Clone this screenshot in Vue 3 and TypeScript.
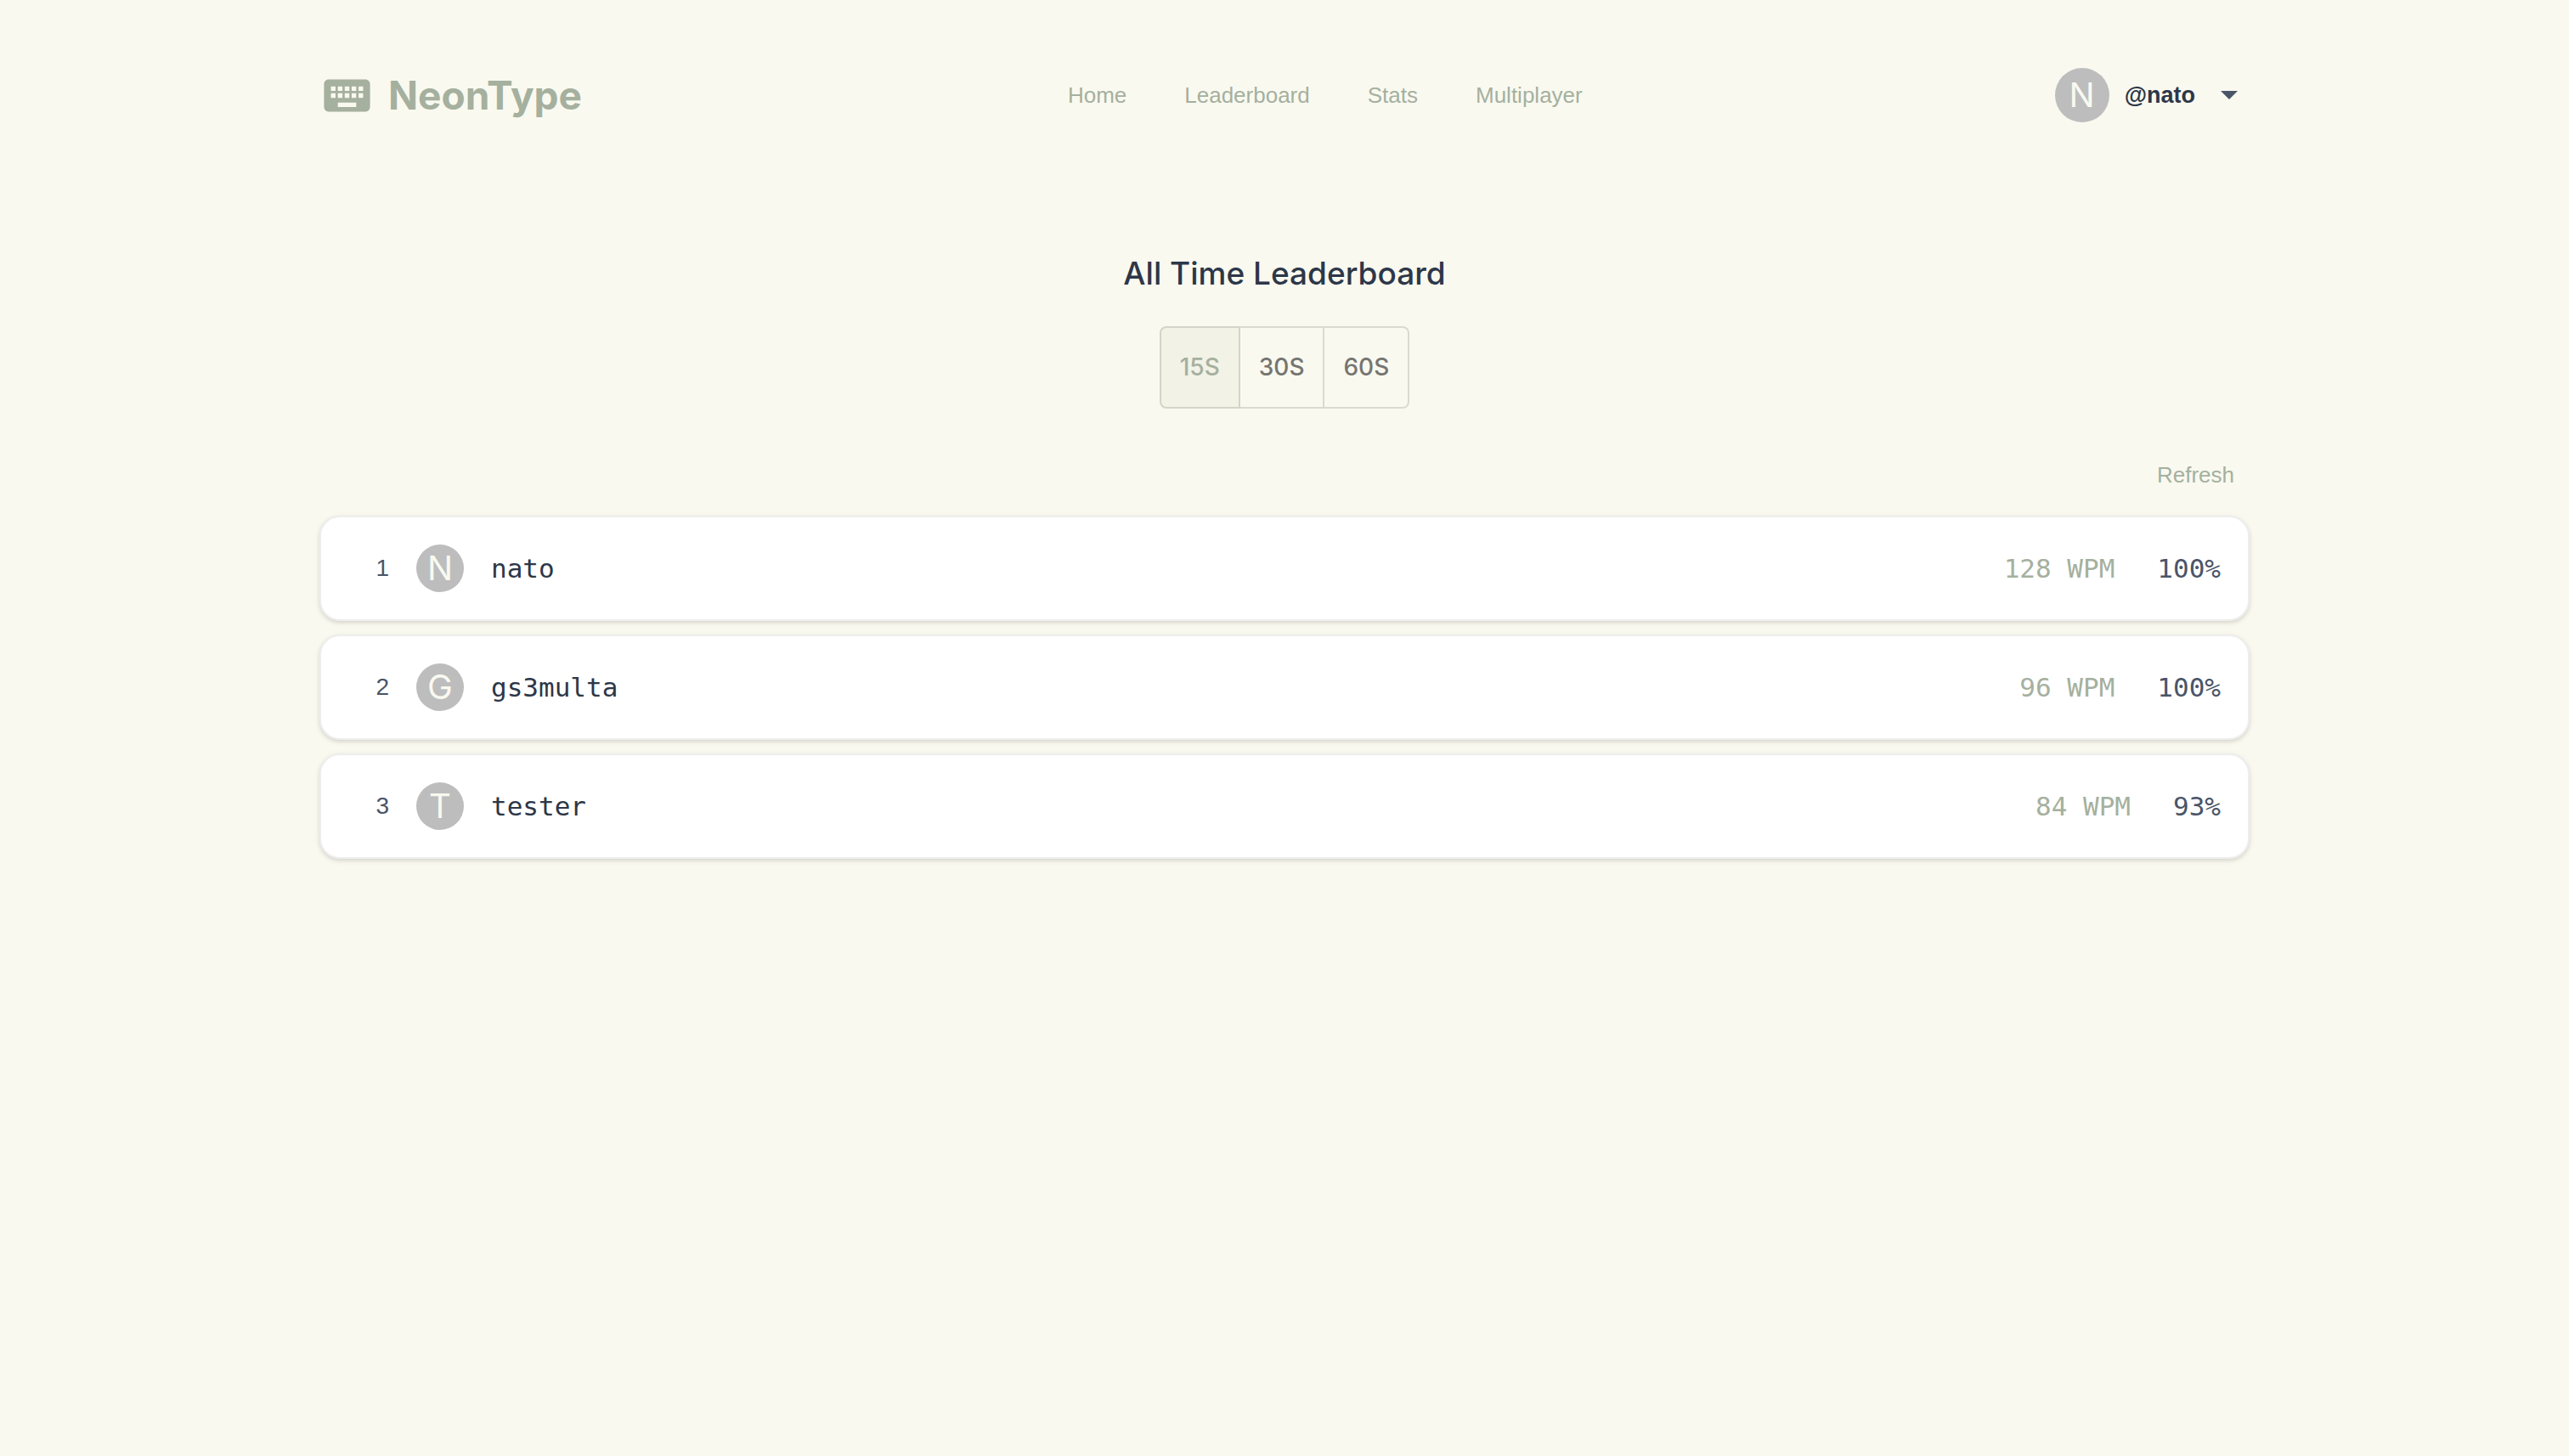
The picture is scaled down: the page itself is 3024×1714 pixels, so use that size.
<script setup lang="ts">
import { ref } from 'vue'

interface Entry {
  rank: number
  name: string
  wpm: number
  accuracy: number
}

const links: string[] = ['Home', 'Leaderboard', 'Stats', 'Multiplayer']
const durations: number[] = [15, 30, 60]
const selected = ref<number>(15)

const entries: Entry[] = [
  { rank: 1, name: 'nato', wpm: 128, accuracy: 100 },
  { rank: 2, name: 'gs3multa', wpm: 96, accuracy: 100 },
  { rank: 3, name: 'tester', wpm: 84, accuracy: 93 },
]
</script>

<template>
  <div class="page">
    <header class="header">
      <a class="brand" href="#">
        <svg class="brand-icon" viewBox="0 0 24 24" aria-hidden="true">
          <path
            fill="currentColor"
            d="M20 5H4c-1.1 0-1.99.9-1.99 2L2 17c0 1.1.9 2 2 2h16c1.1 0 2-.9 2-2V7c0-1.1-.9-2-2-2zm-9 3h2v2h-2V8zm0 3h2v2h-2v-2zM8 8h2v2H8V8zm0 3h2v2H8v-2zm-1 2H5v-2h2v2zm0-3H5V8h2v2zm9 7H8v-2h8v2zm0-4h-2v-2h2v2zm0-3h-2V8h2v2zm3 3h-2v-2h2v2zm0-3h-2V8h2v2z"
          />
        </svg>
        <span>NeonType</span>
      </a>
      <nav class="nav">
        <a v-for="link in links" :key="link" href="#">{{ link }}</a>
      </nav>
      <button class="account" type="button">
        <span class="avatar avatar-large">N</span>
        <span>@nato</span>
        <svg class="caret" viewBox="0 0 20 10" aria-hidden="true">
          <path fill="currentColor" d="M0 0h20L10 10z" />
        </svg>
      </button>
    </header>

    <main>
      <h1 class="title">All Time Leaderboard</h1>
      <div class="durations" role="group" aria-label="Test duration">
        <button
          v-for="d in durations"
          :key="d"
          type="button"
          :class="{ active: d === selected }"
          :aria-pressed="d === selected"
          @click="selected = d"
        >{{ d }}S</button>
      </div>
      <div class="toolbar">
        <button class="refresh" type="button">Refresh</button>
      </div>
      <ol class="board">
        <li v-for="entry in entries" :key="entry.rank" class="row">
          <span class="rank">{{ entry.rank }}</span>
          <span class="avatar">{{ entry.name.charAt(0).toUpperCase() }}</span>
          <span class="name">{{ entry.name }}</span>
          <span class="wpm">{{ entry.wpm }} WPM</span>
          <span class="accuracy">{{ entry.accuracy }}%</span>
        </li>
      </ol>
    </main>
  </div>
</template>

<style>
body {
  background: #f9f9f0;
}
</style>

<style scoped>
.page {
  box-sizing: border-box;
  max-width: 2336px;
  margin: 0 auto;
  padding: 64px 32px;
  color: #2d3748;
  font-family: 'Liberation Sans', Arial, sans-serif;
}

a {
  color: inherit;
  text-decoration: none;
}

button {
  margin: 0;
  padding: 0;
  border: 0;
  background: none;
  color: inherit;
  font: inherit;
  cursor: pointer;
}

.header {
  display: flex;
  align-items: center;
  justify-content: space-between;
  height: 96px;
}

.brand {
  display: flex;
  align-items: center;
  gap: 16px;
  color: #a5b09e;
  font-family: Inter, sans-serif;
  font-size: 46px;
  font-weight: 700;
  line-height: 64px;
}

.brand-icon {
  width: 65px;
  height: 65px;
}

.nav {
  display: flex;
  gap: 68px;
  padding-left: 16px;
  color: #a5b09e;
  font-size: 26px;
  line-height: 32px;
}

.account {
  display: flex;
  align-items: center;
  padding-right: 14px;
  font-size: 27px;
  font-weight: 700;
  line-height: 32px;
}

.avatar {
  display: flex;
  flex: none;
  align-items: center;
  justify-content: center;
  width: 56px;
  height: 56px;
  border-radius: 50%;
  background: #bdbdbd;
  color: #f9f9f0;
  font-family: Inter, sans-serif;
  font-size: 40px;
  font-weight: 400;
  line-height: 40px;
}

.avatar-large {
  width: 64px;
  height: 64px;
  margin-right: 18px;
}

.caret {
  width: 20px;
  height: 10px;
  margin-left: 30px;
  color: #4a5568;
}

.title {
  margin: 138px 0 0;
  font-family: Inter, sans-serif;
  font-size: 37px;
  font-weight: 500;
  line-height: 48px;
  text-align: center;
}

.durations {
  display: flex;
  justify-content: center;
  margin-top: 38px;
}

.durations button {
  padding: 22px;
  border: 2px solid #dadad0;
  color: #757570;
  font-family: Inter, sans-serif;
  font-size: 28px;
  font-weight: 500;
  line-height: 49px;
}

.durations button + button {
  border-left-width: 0;
}

.durations button:first-child {
  border-radius: 8px 0 0 8px;
}

.durations button:last-child {
  border-radius: 0 8px 8px 0;
}

.durations .active {
  border-color: #d4d4c8;
  background: #f2f2e6;
  color: #a5b09e;
}

.toolbar {
  display: flex;
  justify-content: flex-end;
  margin-top: 62px;
  padding-right: 18px;
}

.refresh {
  color: #a5b09e;
  font-size: 26px;
  line-height: 32px;
}

.board {
  display: flex;
  flex-direction: column;
  gap: 16px;
  margin: 32px 0 0;
  padding: 0;
  list-style: none;
}

.row {
  display: flex;
  align-items: center;
  box-sizing: border-box;
  height: 124px;
  padding: 0 32px 0 30px;
  border: 2px solid #eeeeee;
  border-radius: 24px;
  background: #ffffff;
  box-shadow: 0 2px 6px rgba(0, 0, 0, 0.1), 0 2px 4px rgba(0, 0, 0, 0.06);
  font-family: 'DejaVu Sans Mono', monospace;
  font-size: 31px;
  line-height: 40px;
}

.rank {
  width: 50px;
  margin-right: 32px;
  color: #4a5568;
  font-family: 'Liberation Sans', Arial, sans-serif;
  font-size: 28px;
  text-align: right;
}

.name {
  flex: 1;
  margin-left: 32px;
}

.wpm {
  margin-right: 50px;
  color: #a5b09e;
}

.accuracy {
  color: #4a5568;
}
</style>
